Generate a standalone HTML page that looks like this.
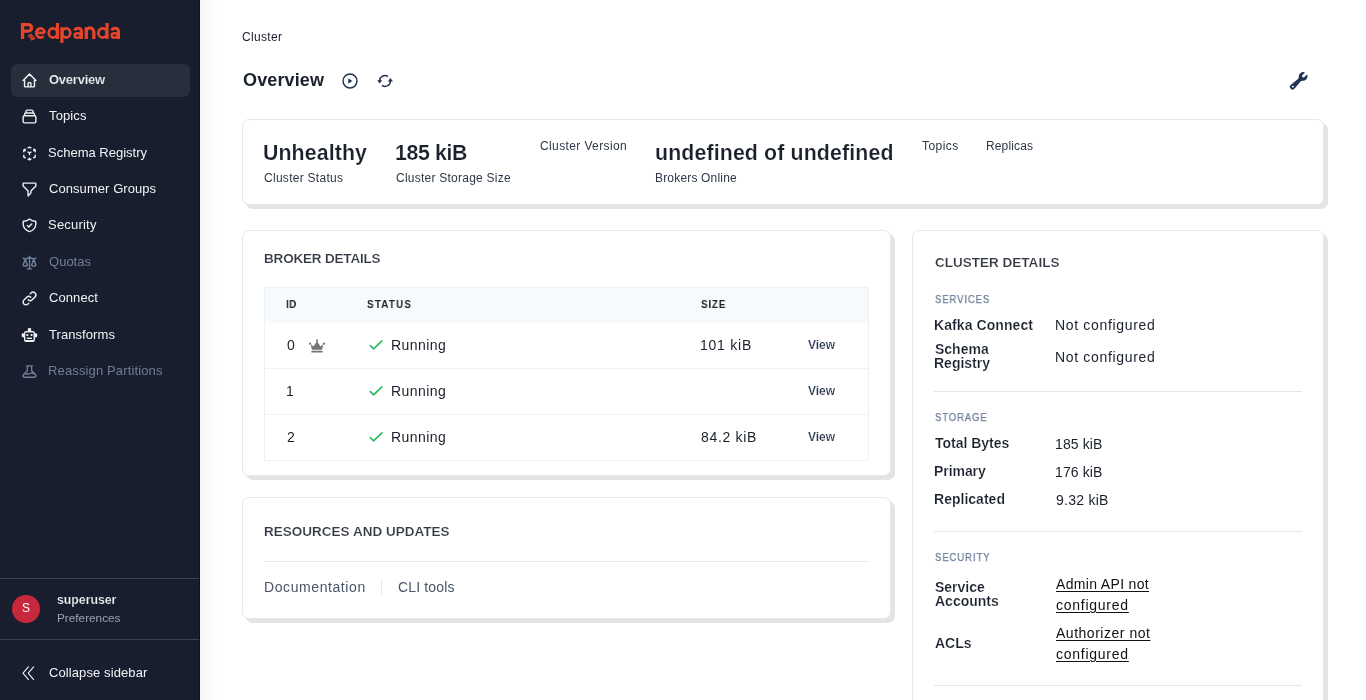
<!DOCTYPE html>
<html><head><meta charset="utf-8"><title>Redpanda Console</title>
<style>
html,body{margin:0;padding:0;}
body{width:1366px;height:700px;overflow:hidden;position:relative;background:#fff;font-family:"Liberation Sans",sans-serif;}
.t{position:absolute;white-space:nowrap;line-height:normal;will-change:transform;}
.ic{position:absolute;display:block;overflow:visible;}
.sb{position:absolute;left:0;top:0;width:200px;height:700px;background:#181e2d;}
.sbedge{position:absolute;left:199px;top:0;width:1px;height:700px;background:#0f1420;}
.sbshadow{position:absolute;left:200px;top:0;width:20px;height:700px;background:linear-gradient(to right,rgba(0,0,0,0.035),rgba(0,0,0,0.015) 40%,rgba(0,0,0,0));}
.active{position:absolute;left:11px;top:64px;width:179px;height:33px;border-radius:6px;background:#282e3c;}
.hr{position:absolute;left:0;width:199px;height:1px;background:#3d424c;}
.avatar{position:absolute;left:12px;top:595px;width:28px;height:28px;border-radius:50%;background:#c8283c;color:#fff;font-size:12px;text-align:center;line-height:26.5px;will-change:transform;}
.card{position:absolute;box-sizing:border-box;border:1px solid #e2e8f0;border-radius:7px;background:#fff;box-shadow:4px 4px 0 0 #e4e4e4;}
.tbl{position:absolute;left:264px;top:287px;width:605px;height:174px;box-sizing:border-box;border:1px solid #edf2f7;}
.th{position:absolute;left:265px;top:288px;width:603px;height:35px;background:#f7fafc;}
.rl{position:absolute;left:265px;width:603px;height:1px;background:#edf2f7;}
.dv{position:absolute;height:1px;background:#e2e8f0;}
</style></head><body>
<div class=sb></div><div class=sbedge></div><div class=sbshadow></div>
<div class=active></div>
<div class=hr style="top:578px"></div>
<div class=hr style="top:639px"></div>
<div class=avatar>S</div>
<div class=card style="left:242px;top:119px;width:1082px;height:86px"></div>
<div class=card style="left:242px;top:230px;width:649px;height:246px"></div>
<div class=card style="left:242px;top:497px;width:649px;height:122px"></div>
<div class=card style="left:912px;top:230px;width:412px;height:520px"></div>
<div class=tbl></div><div class=th></div>
<div class=rl style="top:368px"></div><div class=rl style="top:414px"></div>
<div class=dv style="left:264px;top:561px;width:605px"></div>
<div class=dv style="left:381px;top:579px;width:1px;height:16px"></div>
<div class=dv style="left:934px;top:391px;width:368px"></div>
<div class=dv style="left:934px;top:531px;width:368px"></div>
<div class=dv style="left:934px;top:685px;width:368px"></div>
<svg class=ic style='left:18px;top:20px' width=106 height=26 viewBox='18 20 106 26'><rect x='20.90' y='22.90' width='3.30' height='16.05' fill='#e5452a'/><path d='M22.5 24.55H28.3A3.25 3.3 0 0 1 28.3 31.15H22.5' stroke='#e5452a' stroke-width='3.3' fill='none' stroke-linecap='butt'/><path d='M28.10 36.20L32.10 34.20' stroke='#e5452a' stroke-width='1.75' fill='none' stroke-linecap='butt'/><path d='M29.50 38.05L33.50 36.05' stroke='#e5452a' stroke-width='1.75' fill='none' stroke-linecap='butt'/><path d='M30.95 39.90L34.95 37.90' stroke='#e5452a' stroke-width='1.75' fill='none' stroke-linecap='butt'/><path d='M36.0 32.75H44.75M44.75 32.75A4.2 4.6 0 1 0 43.6 36.2' stroke='#e5452a' stroke-width='2.75' fill='none' stroke-linecap='butt'/><ellipse cx='53.00' cy='32.90' rx='4.25' ry='4.65' stroke='#e5452a' stroke-width='2.75' fill='none'/><rect x='55.90' y='23.00' width='3.10' height='15.95' fill='#e5452a'/><ellipse cx='66.20' cy='32.90' rx='4.05' ry='4.65' stroke='#e5452a' stroke-width='2.75' fill='none'/><rect x='60.30' y='27.20' width='3.20' height='15.65' fill='#e5452a'/><path d='M74.50 30.4Q75.40 28.25 78.10 28.25Q81.40 28.25 81.40 31.6V38.95' stroke='#e5452a' stroke-width='3.1' fill='none' stroke-linecap='butt'/><ellipse cx='77.60' cy='35.40' rx='3.05' ry='2.20' stroke='#e5452a' stroke-width='2.5' fill='none'/><rect x='84.60' y='27.10' width='3.30' height='11.85' fill='#e5452a'/><path d='M86.25 32.3A3.8 4.4 0 0 1 93.85 32.3V38.95' stroke='#e5452a' stroke-width='3.2' fill='none' stroke-linecap='butt'/><ellipse cx='102.60' cy='32.90' rx='4.25' ry='4.65' stroke='#e5452a' stroke-width='2.75' fill='none'/><rect x='105.50' y='23.00' width='3.10' height='15.95' fill='#e5452a'/><path d='M111.60 30.4Q112.50 28.25 115.20 28.25Q118.50 28.25 118.50 31.6V38.95' stroke='#e5452a' stroke-width='3.1' fill='none' stroke-linecap='butt'/><ellipse cx='114.70' cy='35.40' rx='3.05' ry='2.20' stroke='#e5452a' stroke-width='2.5' fill='none'/></svg>
<svg class=ic style='left:20.9px;top:71.8px' width=17 height=17 viewBox='0 0 24 24' fill='none' stroke='#eef0f4' stroke-width='2' stroke-linecap='round' stroke-linejoin='round'><path d='M3 12l2-2m0 0l7-7 7 7M5 10v10a1 1 0 001 1h3m10-11l2 2m-2-2v10a1 1 0 01-1 1h-3m-6 0a1 1 0 001-1v-4a1 1 0 011-1h2a1 1 0 011 1v4a1 1 0 001 1m-6 0h6'/></svg><svg class=ic style='left:21.0px;top:108.3px' width=17 height=17 viewBox='0 0 24 24' fill='none' stroke='#eef0f4' stroke-width='2' stroke-linecap='round' stroke-linejoin='round'><path d='M19 11H5m14 0a2 2 0 012 2v6a2 2 0 01-2 2H5a2 2 0 01-2-2v-6a2 2 0 012-2m14 0V9a2 2 0 00-2-2M5 11V9a2 2 0 012-2m0 0V5a2 2 0 012-2h6a2 2 0 012 2v2M7 7h10'/></svg><svg class=ic style='left:20.7px;top:144.8px' width=17 height=17 viewBox='0 0 24 24' fill='none' stroke='#eef0f4' stroke-width='2' stroke-linecap='round' stroke-linejoin='round'><path d='M14 10l-2 1m0 0l-2-1m2 1v2.5M20 7l-2 1m2-1l-2-1m2 1v2.5M14 4l-2-1-2 1M4 7l2-1M4 7l2 1M4 7v2.5M12 21l-2-1m2 1l2-1m-2 1v-2.5M6 18l-2-1v-2.5M18 18l2-1v-2.5'/></svg><svg class=ic style='left:20.8px;top:180.9px' width=17 height=17 viewBox='0 0 24 24' fill='none' stroke='#eef0f4' stroke-width='2' stroke-linecap='round' stroke-linejoin='round'><path d='M3 4a1 1 0 011-1h16a1 1 0 011 1v2.586a1 1 0 01-.293.707l-6.414 6.414a1 1 0 00-.293.707V17l-4 4v-6.586a1 1 0 00-.293-.707L3.293 7.293A1 1 0 013 6.586V4z'/></svg><svg class=ic style='left:20.8px;top:216.7px' width=17 height=17 viewBox='0 0 24 24' fill='none' stroke='#eef0f4' stroke-width='2' stroke-linecap='round' stroke-linejoin='round'><path d='M9 12l2 2 4-4m5.618-4.016A11.955 11.955 0 0112 2.944a11.955 11.955 0 01-8.618 3.04A12.02 12.02 0 003 9c0 5.591 3.824 10.29 9 11.622 5.176-1.332 9-6.03 9-11.622 0-1.042-.133-2.052-.382-3.016z'/></svg><svg class=ic style='left:20.9px;top:254.3px' width=17 height=17 viewBox='0 0 24 24' fill='none' stroke='#6f7f98' stroke-width='2' stroke-linecap='round' stroke-linejoin='round'><path d='M3 6l3 1m0 0l-3 9a5.002 5.002 0 006.001 0M6 7l3 9M6 7l6-2m6 2l3-1m-3 1l-3 9a5.002 5.002 0 006.001 0M18 7l3 9m-3-9l-6-2m0-2v2m0 16V5m0 16H9m3 0h3'/></svg><svg class=ic style='left:21.1px;top:290.0px' width=17 height=17 viewBox='0 0 24 24' fill='none' stroke='#eef0f4' stroke-width='2' stroke-linecap='round' stroke-linejoin='round'><path d='M13.828 10.172a4 4 0 00-5.656 0l-4 4a4 4 0 105.656 5.656l1.102-1.101m-.758-4.899a4 4 0 005.656 0l4-4a4 4 0 00-5.656-5.656l-1.1 1.1'/></svg><svg class=ic style='left:21px;top:327px' width=17 height=16 viewBox='21 327 17 16'><rect x='27.8' y='328.1' width='3.4' height='3.6' rx='1.3' fill='#eef0f4'/><rect x='21.7' y='333.2' width='3' height='4.2' rx='1.4' fill='#eef0f4'/><rect x='34.2' y='333.2' width='3' height='4.2' rx='1.4' fill='#eef0f4'/><rect x='24' y='331.1' width='10.9' height='10.8' rx='2' fill='#eef0f4'/><rect x='25.3' y='332.4' width='8.2' height='7.5' rx='0.4' fill='#181e2d'/><rect x='26.4' y='334' width='1.9' height='2' rx='.6' fill='#eef0f4'/><rect x='30.6' y='334' width='1.9' height='2' rx='.6' fill='#eef0f4'/><rect x='26.8' y='337.6' width='5.2' height='1.4' fill='#eef0f4'/></svg><svg class=ic style='left:21.0px;top:363.0px' width=17 height=17 viewBox='0 0 24 24' fill='none' stroke='#6f7f98' stroke-width='2' stroke-linecap='round' stroke-linejoin='round'><path d='M19.428 15.428a2 2 0 00-1.022-.547l-2.387-.477a6 6 0 00-3.86.517l-.318.158a6 6 0 01-3.86.517L6.05 15.21a2 2 0 00-1.806.547M8 4h8l-1 1v5.172a2 2 0 00.586 1.414l5 5c1.26 1.26.367 3.414-1.415 3.414H4.828c-1.782 0-2.674-2.154-1.414-3.414l5-5A2 2 0 009 10.172V5L8 4z'/></svg><svg class=ic style='left:20px;top:664px' width=17 height=18 viewBox='20 664 17 18' fill='none' stroke='#eef0f4' stroke-width='1.1' stroke-linecap='round' stroke-linejoin='round'><path d='M28.4 666.8L23 673.2l5.4 6.4M33.6 666.8l-5.4 6.4 5.4 6.4'/></svg>
<svg class=ic style='left:342px;top:73px' width=16 height=16 viewBox='0 0 16 16'><circle cx='8' cy='8' r='6.95' fill='none' stroke='#22304f' stroke-width='1.45'/><path d='M6.3 5.2v5.6L10.3 8z' fill='#22304f'/></svg><svg class=ic style='left:375px;top:73px' width=20 height=16 viewBox='375 73 20 16'><path d='M387.6 76.2A5.3 5.3 0 0 0 379.7 80.6' fill='none' stroke='#22304f' stroke-width='1.45' stroke-linecap='round'/><path d='M377.1 80.3H382.3L379.7 83.6Z' fill='#22304f'/><path d='M382.4 85.6A5.3 5.3 0 0 0 390.4 81.2' fill='none' stroke='#22304f' stroke-width='1.45' stroke-linecap='round'/><path d='M387.8 81.4H393L390.4 78.1Z' fill='#22304f'/></svg><svg class=ic style='left:1289.3px;top:71.3px' width=19.5 height=19.5 viewBox='0 0 20 20'><path fill='#233354' fill-rule='evenodd' d='M19 5.5a4.5 4.5 0 01-4.791 4.49c-.873-.055-1.808.128-2.368.8l-6.024 7.23a2.724 2.724 0 11-3.837-3.837L9.21 8.16c.672-.56.855-1.495.8-2.368a4.5 4.5 0 015.873-4.575c.324.105.39.51.15.752L13.34 4.66a.455.455 0 00-.11.494 3.010 3.010 0 001.617 1.617c.17.07.363.02.493-.111l2.692-2.692c.241-.241.647-.174.752.15.14.435.216.9.216 1.382zM4 17a1 1 0 100-2 1 1 0 000 2z'/></svg>
<svg class=ic style='left:368px;top:338px' width=16 height=13 viewBox='368 338 16 13'><path d='M370.4 345.6L373.6 348.9L381.9 340.9' fill='none' stroke='#27b860' stroke-width='1.55' stroke-linecap='round' stroke-linejoin='round'/></svg><svg class=ic style='left:368px;top:384px' width=16 height=13 viewBox='368 384 16 13'><path d='M370.4 391.6L373.6 394.9L381.9 386.9' fill='none' stroke='#27b860' stroke-width='1.55' stroke-linecap='round' stroke-linejoin='round'/></svg><svg class=ic style='left:368px;top:430px' width=16 height=13 viewBox='368 430 16 13'><path d='M370.4 437.6L373.6 440.9L381.9 432.9' fill='none' stroke='#27b860' stroke-width='1.55' stroke-linecap='round' stroke-linejoin='round'/></svg><svg class=ic style='left:308px;top:338px' width=18 height=16 viewBox='308 338 18 16'><path d='M310.6 344.1L313.6 346.6L317 341.1L320.4 346.6L323.4 344.1L322 349.7H312Z' fill='#757575'/><circle cx='310.1' cy='343.7' r='1.1' fill='#757575'/><circle cx='317' cy='340.6' r='1.15' fill='#757575'/><circle cx='323.9' cy='343.7' r='1.1' fill='#757575'/><rect x='311.4' y='350.8' width='11.2' height='1.6' rx='.5' fill='#757575'/></svg>
<div class=t style="left:49.00px;top:71.73px;font-size:13px;font-weight:700;color:#f1f3f6;letter-spacing:-0.243px;-webkit-text-stroke:0.18px #282e3c;">Overview</div>
<div class=t style="left:49.00px;top:108.14px;font-size:13px;font-weight:400;color:#f1f3f6;letter-spacing:0.13px;">Topics</div>
<div class=t style="left:48.00px;top:144.54px;font-size:13px;font-weight:400;color:#f1f3f6;letter-spacing:0.001px;">Schema Registry</div>
<div class=t style="left:49.00px;top:180.94px;font-size:13px;font-weight:400;color:#f1f3f6;letter-spacing:0.064px;">Consumer Groups</div>
<div class=t style="left:48.00px;top:217.33px;font-size:13px;font-weight:400;color:#f1f3f6;letter-spacing:0.206px;">Security</div>
<div class=t style="left:49.00px;top:253.74px;font-size:13px;font-weight:400;color:#6f7f98;letter-spacing:0.017px;">Quotas</div>
<div class=t style="left:49.00px;top:290.13px;font-size:13px;font-weight:400;color:#f1f3f6;letter-spacing:0.082px;">Connect</div>
<div class=t style="left:49.00px;top:326.53px;font-size:13px;font-weight:400;color:#f1f3f6;letter-spacing:0.072px;">Transforms</div>
<div class=t style="left:48.00px;top:362.94px;font-size:13px;font-weight:400;color:#6f7f98;letter-spacing:0.133px;">Reassign Partitions</div>
<div class=t style="left:57.30px;top:592.87px;font-size:12.3px;font-weight:700;color:#f1f3f6;letter-spacing:-0.009px;-webkit-text-stroke:0.18px #181e2d;">superuser</div>
<div class=t style="left:57.30px;top:611.32px;font-size:11.8px;font-weight:400;color:#9aa3b2;letter-spacing:-0.011px;">Preferences</div>
<div class=t style="left:48.50px;top:665.24px;font-size:13px;font-weight:400;color:#f1f3f6;letter-spacing:0.1px;">Collapse sidebar</div>
<div class=t style="left:242.30px;top:30.34px;font-size:12px;font-weight:400;color:#1a202c;letter-spacing:0.331px;">Cluster</div>
<div class=t style="left:242.50px;top:69.61px;font-size:18px;font-weight:700;color:#1a202c;letter-spacing:0.136px;-webkit-text-stroke:0;">Overview</div>
<div class=t style="left:263.30px;top:141.02px;font-size:21.3px;font-weight:700;color:#1a202c;letter-spacing:0.112px;-webkit-text-stroke:0.18px #ffffff;">Unhealthy</div>
<div class=t style="left:264.30px;top:170.94px;font-size:12px;font-weight:400;color:#2d3748;letter-spacing:0.28px;">Cluster Status</div>
<div class=t style="left:395.30px;top:141.02px;font-size:21.3px;font-weight:700;color:#1a202c;letter-spacing:-0.369px;-webkit-text-stroke:0.18px #ffffff;">185 kiB</div>
<div class=t style="left:396.30px;top:170.94px;font-size:12px;font-weight:400;color:#2d3748;letter-spacing:0.243px;">Cluster Storage Size</div>
<div class=t style="left:540.10px;top:139.44px;font-size:12px;font-weight:400;color:#2d3748;letter-spacing:0.379px;">Cluster Version</div>
<div class=t style="left:654.80px;top:140.52px;font-size:21.3px;font-weight:700;color:#1a202c;letter-spacing:0.142px;-webkit-text-stroke:0.18px #ffffff;">undefined of undefined</div>
<div class=t style="left:654.80px;top:171.44px;font-size:12px;font-weight:400;color:#2d3748;letter-spacing:0.178px;">Brokers Online</div>
<div class=t style="left:921.90px;top:138.94px;font-size:12px;font-weight:400;color:#2d3748;letter-spacing:0.457px;">Topics</div>
<div class=t style="left:986.20px;top:138.94px;font-size:12px;font-weight:400;color:#2d3748;letter-spacing:0.14px;">Replicas</div>
<div class=t style="left:263.50px;top:250.58px;font-size:13.5px;font-weight:700;color:#333842;letter-spacing:-0.184px;-webkit-text-stroke:0.18px #ffffff;">BROKER DETAILS</div>
<div class=t style="left:286.20px;top:298.05px;font-size:11px;font-weight:700;color:#1a202c;letter-spacing:0.388px;-webkit-text-stroke:0;transform:scaleX(0.9);transform-origin:0 0;">ID</div>
<div class=t style="left:367.30px;top:298.05px;font-size:11px;font-weight:700;color:#1a202c;letter-spacing:1.305px;-webkit-text-stroke:0;transform:scaleX(0.9);transform-origin:0 0;">STATUS</div>
<div class=t style="left:700.60px;top:298.05px;font-size:11px;font-weight:700;color:#1a202c;letter-spacing:0.851px;-webkit-text-stroke:0;transform:scaleX(0.9);transform-origin:0 0;">SIZE</div>
<div class=t style="left:286.50px;top:337.13px;font-size:14px;font-weight:400;color:#1a202c;">0</div>
<div class=t style="left:391.30px;top:337.13px;font-size:14px;font-weight:400;color:#1a202c;letter-spacing:0.439px;">Running</div>
<div class=t style="left:699.90px;top:337.13px;font-size:14px;font-weight:400;color:#1a202c;letter-spacing:0.774px;">101 kiB</div>
<div class=t style="left:808.30px;top:338.04px;font-size:12px;font-weight:700;color:#2a3650;letter-spacing:-0.032px;-webkit-text-stroke:0.18px #ffffff;">View</div>
<div class=t style="left:285.50px;top:383.13px;font-size:14px;font-weight:400;color:#1a202c;">1</div>
<div class=t style="left:391.30px;top:383.13px;font-size:14px;font-weight:400;color:#1a202c;letter-spacing:0.439px;">Running</div>
<div class=t style="left:808.30px;top:384.04px;font-size:12px;font-weight:700;color:#2a3650;letter-spacing:-0.032px;-webkit-text-stroke:0.18px #ffffff;">View</div>
<div class=t style="left:286.50px;top:429.13px;font-size:14px;font-weight:400;color:#1a202c;">2</div>
<div class=t style="left:391.30px;top:429.13px;font-size:14px;font-weight:400;color:#1a202c;letter-spacing:0.439px;">Running</div>
<div class=t style="left:700.90px;top:429.13px;font-size:14px;font-weight:400;color:#1a202c;letter-spacing:0.679px;">84.2 kiB</div>
<div class=t style="left:808.30px;top:430.04px;font-size:12px;font-weight:700;color:#2a3650;letter-spacing:-0.032px;-webkit-text-stroke:0.18px #ffffff;">View</div>
<div class=t style="left:263.50px;top:524.48px;font-size:13.5px;font-weight:700;color:#333842;letter-spacing:0.012px;-webkit-text-stroke:0.18px #ffffff;">RESOURCES AND UPDATES</div>
<div class=t style="left:263.50px;top:579.33px;font-size:14px;font-weight:400;color:#4a5568;letter-spacing:0.585px;">Documentation</div>
<div class=t style="left:397.80px;top:579.33px;font-size:14px;font-weight:400;color:#4a5568;letter-spacing:0.144px;">CLI tools</div>
<div class=t style="left:934.50px;top:254.68px;font-size:13.5px;font-weight:700;color:#333842;letter-spacing:0.011px;-webkit-text-stroke:0.18px #ffffff;">CLUSTER DETAILS</div>
<div class=t style="left:934.50px;top:293.15px;font-size:11px;font-weight:400;color:#687a96;letter-spacing:1.1px;-webkit-text-stroke:0.25px #687a96;transform:scaleX(0.86);transform-origin:0 0;">SERVICES</div>
<div class=t style="left:933.50px;top:317.23px;font-size:14px;font-weight:700;color:#1a202c;letter-spacing:0.078px;-webkit-text-stroke:0.18px #ffffff;">Kafka Connect</div>
<div class=t style="left:1055.10px;top:317.23px;font-size:14px;font-weight:400;color:#1a202c;letter-spacing:0.672px;">Not configured</div>
<div class=t style="left:934.50px;top:341.03px;font-size:14px;font-weight:700;color:#1a202c;-webkit-text-stroke:0.18px #ffffff;">Schema</div>
<div class=t style="left:933.50px;top:354.53px;font-size:14px;font-weight:700;color:#1a202c;-webkit-text-stroke:0.18px #ffffff;">Registry</div>
<div class=t style="left:1055.10px;top:349.03px;font-size:14px;font-weight:400;color:#1a202c;letter-spacing:0.672px;">Not configured</div>
<div class=t style="left:934.50px;top:411.05px;font-size:11px;font-weight:400;color:#687a96;letter-spacing:1.086px;-webkit-text-stroke:0.25px #687a96;transform:scaleX(0.86);transform-origin:0 0;">STORAGE</div>
<div class=t style="left:934.50px;top:435.33px;font-size:14px;font-weight:700;color:#1a202c;letter-spacing:-0.024px;-webkit-text-stroke:0.18px #ffffff;">Total Bytes</div>
<div class=t style="left:1055.00px;top:436.33px;font-size:14px;font-weight:400;color:#1a202c;letter-spacing:0.107px;">185 kiB</div>
<div class=t style="left:933.50px;top:463.33px;font-size:14px;font-weight:700;color:#1a202c;letter-spacing:-0.06px;-webkit-text-stroke:0.18px #ffffff;">Primary</div>
<div class=t style="left:1055.00px;top:464.33px;font-size:14px;font-weight:400;color:#1a202c;letter-spacing:0.107px;">176 kiB</div>
<div class=t style="left:933.50px;top:491.33px;font-size:14px;font-weight:700;color:#1a202c;letter-spacing:0.017px;-webkit-text-stroke:0.18px #ffffff;">Replicated</div>
<div class=t style="left:1056.00px;top:492.33px;font-size:14px;font-weight:400;color:#1a202c;letter-spacing:0.25px;">9.32 kiB</div>
<div class=t style="left:934.50px;top:551.25px;font-size:11px;font-weight:400;color:#687a96;letter-spacing:1.096px;-webkit-text-stroke:0.25px #687a96;transform:scaleX(0.86);transform-origin:0 0;">SECURITY</div>
<div class=t style="left:934.50px;top:579.33px;font-size:14px;font-weight:700;color:#1a202c;-webkit-text-stroke:0.18px #ffffff;">Service</div>
<div class=t style="left:934.50px;top:592.73px;font-size:14px;font-weight:700;color:#1a202c;-webkit-text-stroke:0.18px #ffffff;">Accounts</div>
<div class=t style="left:1055.50px;top:576.13px;font-size:14px;font-weight:400;color:#111;letter-spacing:0.333px;text-decoration:underline;text-underline-offset:2px;text-decoration-thickness:1px;">Admin API not</div>
<div class=t style="left:1055.50px;top:597.13px;font-size:14px;font-weight:400;color:#111;letter-spacing:0.745px;text-decoration:underline;text-underline-offset:2px;text-decoration-thickness:1px;">configured</div>
<div class=t style="left:934.50px;top:635.13px;font-size:14px;font-weight:700;color:#1a202c;-webkit-text-stroke:0.18px #ffffff;">ACLs</div>
<div class=t style="left:1055.50px;top:624.93px;font-size:14px;font-weight:400;color:#111;letter-spacing:0.518px;text-decoration:underline;text-underline-offset:2px;text-decoration-thickness:1px;">Authorizer not</div>
<div class=t style="left:1055.50px;top:646.03px;font-size:14px;font-weight:400;color:#111;letter-spacing:0.745px;text-decoration:underline;text-underline-offset:2px;text-decoration-thickness:1px;">configured</div>
</body></html>
